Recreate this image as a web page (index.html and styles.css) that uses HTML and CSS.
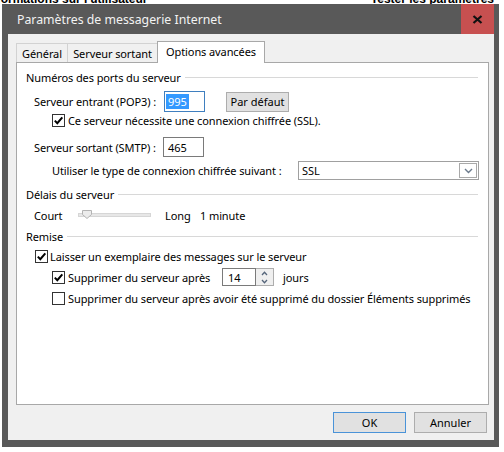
FILE: index.html
```html
<!DOCTYPE html>
<html lang="fr">
<head>
<meta charset="utf-8">
<title>Paramètres de messagerie Internet</title>
<link rel="stylesheet" href="styles.css">
</head>
<body>
<div class="backdrop">
  <span class="bg-text bg-left">Informations sur l'utilisateur</span>
  <span class="bg-text bg-right">Tester les paramètres</span>
</div>
<div class="window">
  <div class="titlebar">
    <span class="title">Paramètres de messagerie Internet</span>
    <span class="close" aria-label="Fermer">
      <svg width="11" height="9" viewBox="0 0 11 9"><path d="M1.5 1 L9.5 8 M9.5 1 L1.5 8" stroke="#111" stroke-width="2.2" fill="none"/></svg>
    </span>
  </div>
  <div class="client">
    <div class="tabs">
      <div class="tab tab-general">Général</div>
      <div class="tab tab-sortant">Serveur sortant</div>
      <div class="tab tab-options active">Options avancées</div>
    </div>
    <div class="panel">
      <div class="group g-ports">Numéros des ports du serveur</div>

      <div class="row r-pop3">
        <span class="lbl lbl-port">Serveur entrant (POP3) :</span>
        <span class="field field-focus"><span class="selected">995</span></span>
        <button class="btn btn-default">Par défaut</button>
      </div>

      <div class="row r-ssl">
        <span class="cb checked"><svg width="11" height="11" viewBox="0 0 11 11"><path d="M1.8 5.6 L4.3 8.2 L9.3 2.3" stroke="#000" stroke-width="2" fill="none"/></svg></span>
        <span class="cb-label">Ce serveur nécessite une connexion chiffrée (SSL).</span>
      </div>

      <div class="row r-smtp">
        <span class="lbl lbl-port2">Serveur sortant (SMTP) :</span>
        <span class="field field-smtp">465</span>
      </div>

      <div class="row r-util">
        <span>Utiliser le type de connexion chiffrée suivant :</span>
        <span class="select">
          <span class="select-value">SSL</span>
          <span class="select-arrow"><svg width="9" height="6" viewBox="0 0 9 6"><path d="M1 1 L4.5 4.5 L8 1" stroke="#6b7a8c" stroke-width="1.4" fill="none"/></svg></span>
        </span>
      </div>

      <div class="group g-delais">Délais du serveur</div>

      <div class="row r-slider">
        <span class="lbl-court">Court</span>
        <svg class="slider" width="74" height="10" viewBox="0 0 74 10">
          <rect x="0.5" y="3.5" width="72" height="3" fill="#e7e7e7" stroke="#d6d6d6"/>
          <path d="M4.5 0.5 H13.5 V4.5 L9 8.5 L4.5 4.5 Z" fill="#ececec" stroke="#b4b4b4"/>
        </svg>
        <span class="lbl-long">Long</span>
        <span>1 minute</span>
      </div>

      <div class="group g-remise">Remise</div>

      <div class="row r-cb1">
        <span class="cb checked"><svg width="11" height="11" viewBox="0 0 11 11"><path d="M1.8 5.6 L4.3 8.2 L9.3 2.3" stroke="#000" stroke-width="2" fill="none"/></svg></span>
        <span class="cb-label cb-label-tight">Laisser un exemplaire des messages sur le serveur</span>
      </div>

      <div class="row r-cb2">
        <span class="cb checked"><svg width="11" height="11" viewBox="0 0 11 11"><path d="M1.8 5.6 L4.3 8.2 L9.3 2.3" stroke="#000" stroke-width="2" fill="none"/></svg></span>
        <span class="cb-label lbl-apres">Supprimer du serveur après</span>
        <span class="spin">
          <span class="spin-field">14</span>
          <span class="spin-btns">
            <span class="spin-half"><svg width="7" height="5" viewBox="0 0 7 5"><path d="M1 4 L3.5 1.3 L6 4" stroke="#55657a" stroke-width="1.3" fill="none"/></svg></span>
            <span class="spin-half"><svg width="7" height="5" viewBox="0 0 7 5"><path d="M1 1 L3.5 3.7 L6 1" stroke="#55657a" stroke-width="1.3" fill="none"/></svg></span>
          </span>
        </span>
        <span class="lbl-jours">jours</span>
      </div>

      <div class="row r-cb3">
        <span class="cb"></span>
        <span class="cb-label">Supprimer du serveur après avoir été supprimé du dossier Éléments supprimés</span>
      </div>
    </div>
    <div class="buttons">
      <button class="btn btn-dlg btn-ok">OK</button>
      <button class="btn btn-dlg">Annuler</button>
    </div>
  </div>
</div>
</body>
</html>
```

FILE: styles.css
```css
* { box-sizing: border-box; }
html, body { margin: 0; padding: 0; }
body {
  width: 504px;
  height: 452px;
  overflow: hidden;
  background: #ffffff;
  font-family: "Noto Sans", "Open Sans", sans-serif;
  font-size: 11px;
  letter-spacing: -0.1px;
  color: #000;
}

/* desktop behind the dialog */
.backdrop {
  height: 4px;
  overflow: hidden;
  display: flex;
  align-items: flex-end;
  justify-content: space-between;
  padding-right: 10px;
}
.bg-text {
  flex: none;
  font-family: "Liberation Sans", sans-serif;
  font-weight: bold;
  font-size: 12px;
  letter-spacing: 0;
  line-height: 13px;
  margin-bottom: -2px;
}
.bg-left { margin-left: -14px; }

/* window frame */
.window {
  margin-left: 2px;
  width: 497px;
  height: 443px;
  background: #595959;
  padding: 0 5px 7px 6px;
  display: flex;
  flex-direction: column;
}
.titlebar {
  height: 30px;
  flex: none;
  display: flex;
  align-items: center;
  justify-content: space-between;
}
.title {
  color: #f3f3f3;
  font-size: 12.3px;
  letter-spacing: 0;
  padding-left: 9px;
}
.close {
  width: 33px;
  height: 30px;
  background: #c75050;
  display: flex;
  align-items: center;
  justify-content: center;
}

.client {
  flex: 1;
  background: #f0f0f0;
  padding: 7px 7px 0 8px;
  display: flex;
  flex-direction: column;
}

/* tabs */
.tabs {
  display: flex;
  align-items: flex-end;
  height: 22px;
  margin-bottom: -1px;
  position: relative;
  z-index: 1;
}
.tab {
  height: 19px;
  margin-bottom: 1px;
  border: 1px solid #d2d2d2;
  border-bottom: none;
  background: #f0f0f0;
  display: flex;
  align-items: center;
  justify-content: center;
  white-space: nowrap;
}
.tab + .tab { border-left: none; }
.tab-general { width: 52px; }
.tab-sortant { width: 90px; }
.tab.active {
  width: 108px;
  height: 22px;
  margin-bottom: 0;
  margin-left: -1px;
  border: 1px solid #a8a8a8;
  border-bottom: none;
  background: #fff;
  padding-bottom: 2px;
}

.panel {
  width: 473px;
  height: 343px;
  flex: none;
  background: #fff;
  border: 1px solid #a8a8a8;
  padding: 6px 10px 0 9px;
  display: flex;
  flex-direction: column;
}

/* group headers */
.group {
  display: flex;
  align-items: center;
  height: 16px;
  white-space: nowrap;
}
.group::after {
  content: "";
  flex: 1;
  height: 1px;
  background: #d8d8d8;
  margin-left: 4px;
}
.g-delais { margin-top: 6px; }
.g-remise { margin-top: 5px; }

.row {
  display: flex;
  align-items: center;
  white-space: nowrap;
}
.r-pop3 { margin-top: 6px; height: 21px; margin-left: 8px; }
.r-ssl { margin-top: 0; height: 16px; margin-left: 26px; }
.r-smtp { margin-top: 9px; height: 20px; margin-left: 8px; }
.r-util { margin-top: 4px; height: 19px; margin-left: 26px; margin-right: -1px; }
.r-slider { margin-top: 5px; height: 16px; margin-left: 8px; }
.r-cb1 { margin-top: 4px; height: 16px; margin-left: 9px; }
.r-cb2 { margin-top: 4px; height: 18px; margin-left: 26px; }
.r-cb3 { margin-top: 4px; height: 16px; margin-left: 26px; }

.lbl-port { width: 130px; }
.lbl-port2 { width: 129px; }

.field {
  height: 21px;
  width: 41px;
  background: #fff;
  border: 1px solid #7a7a7a;
  display: flex;
  align-items: center;
  padding-left: 1px;
}
.field-focus { border-color: #3f7fbf; }
.field-smtp { height: 20px; padding-left: 4px; }
.selected {
  background: #3399ff;
  color: #fff;
  padding: 0 2px;
  line-height: 15px;
}

.btn {
  font: inherit;
  color: #000;
  background: #e1e1e1;
  border: 1px solid #adadad;
  padding: 0;
  margin: 0;
  display: flex;
  align-items: center;
  justify-content: center;
}
.btn-default {
  width: 63px;
  height: 20px;
  margin-left: 21px;
}

/* checkboxes */
.cb {
  width: 13px;
  height: 13px;
  flex: none;
  border: 1px solid #333;
  background: #fff;
  display: flex;
  align-items: center;
  justify-content: center;
}
.cb-label { margin-left: 3px; }
.cb-label-tight { margin-left: 2px; }

/* select */
.select {
  margin-left: auto;
  width: 181px;
  height: 19px;
  border: 1px solid #a0a0a0;
  background: #fff;
  display: flex;
  align-items: center;
  justify-content: space-between;
  padding: 0 1px 0 3px;
}
.select-arrow {
  width: 18px;
  height: 15px;
  border: 1px solid #a9a9a9;
  display: flex;
  align-items: center;
  justify-content: center;
}

/* slider */
.lbl-court { width: 44px; }
.slider { display: block; }
.lbl-long { margin-left: 13px; width: 35px; }

/* spinner */
.lbl-apres { width: 154px; }
.spin { display: flex; height: 18px; }
.spin-field {
  width: 34px;
  height: 18px;
  border: 1px solid #7a7a7a;
  padding-left: 5px;
  display: flex;
  align-items: center;
}
.spin-btns {
  width: 18px;
  height: 18px;
  border: 1px solid #adadad;
  border-left: none;
  display: flex;
  flex-direction: column;
  background: #efefef;
}
.spin-half {
  flex: 1;
  display: flex;
  align-items: center;
  justify-content: center;
}
.lbl-jours { margin-left: 9px; }

/* dialog buttons */
.buttons {
  display: flex;
  justify-content: flex-end;
  gap: 8px;
  margin-top: 7px;
}
.btn-dlg { width: 73px; height: 21px; }
.btn-ok { border-color: #4a93d8; }
```
